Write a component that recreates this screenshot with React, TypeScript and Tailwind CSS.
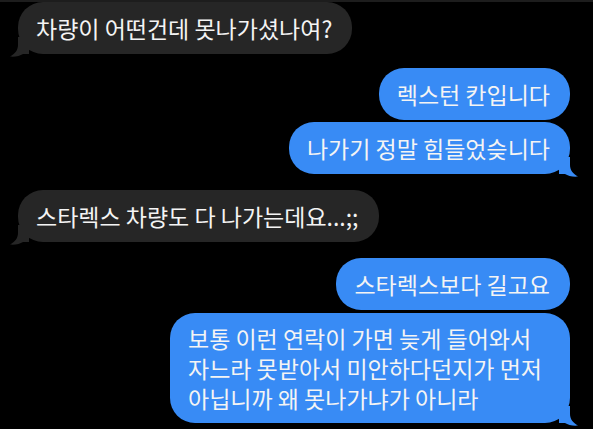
type Msg = { from: "me" | "them"; lines: string[]; tail?: boolean; gap: string };

const messages: Msg[] = [
  { from: "them", lines: ["차량이 어떤건데 못나가셨나여?"], tail: true, gap: "mt-0" },
  { from: "me", lines: ["렉스턴 칸입니다"], gap: "mt-[14px]" },
  { from: "me", lines: ["나가기 정말 힘들었슺니다"], tail: true, gap: "mt-[2px]" },
  { from: "them", lines: ["스타렉스 차량도 다 나가는데요...;;"], tail: true, gap: "mt-[16px]" },
  { from: "me", lines: ["스타렉스보다 길고요"], gap: "mt-[16px]" },
  {
    from: "me",
    lines: [
      "보통 이런 연락이 가면 늦게 들어와서",
      "자느라 못받아서 미안하다던지가 먼저",
      "아닙니까 왜 못나가냐가 아니라",
    ],
    tail: true,
    gap: "mt-[3px]",
  },
];

function Tail({ side, color }: { side: "left" | "right"; color: string }) {
  return (
    <svg
      width="20"
      height="20"
      viewBox="0 0 20 20"
      className={
        side === "right"
          ? "absolute right-[-9px] bottom-[-3px]"
          : "absolute left-[-9px] bottom-[-3px] -scale-x-100"
      }
    >
      <path d="M0 0 L11 0 L11 8 C11 13 14 17 19 19.5 C14 20 9 19 6 17 L0 17 Z" fill={color} />
    </svg>
  );
}

function Bubble({ msg }: { msg: Msg }) {
  const mine = msg.from === "me";
  const color = mine ? "#388bf5" : "#262626";
  const multi = msg.lines.length > 1;
  return (
    <div className={`flex ${mine ? "justify-end pr-[23px]" : "justify-start pl-[18px]"} ${msg.gap}`}>
      <div
        className={`relative rounded-[25px] pl-[18px] text-[23px] leading-[30px] text-[#f4f4f4] ${
          multi ? "py-[10px] pr-[28px]" : "py-[11px] pr-[20px]"
        } ${mine ? "bg-[#388bf5]" : "bg-[#262626]"}`}
      >
        {msg.tail && <Tail side={mine ? "right" : "left"} color={color} />}
        <div className="relative whitespace-nowrap">
          {msg.lines.map((l, i) => (
            <div key={i}>{l}</div>
          ))}
        </div>
      </div>
    </div>
  );
}

export default function App() {
  return (
    <div
      className="h-[429px] w-[593px] overflow-hidden bg-black"
      style={{ fontFamily: '"Noto Sans CJK KR", "Noto Sans", sans-serif' }}
    >
      <div className="h-[2px] bg-[#1d1d1d]" />
      <div className="flex flex-col">
        {messages.map((m, i) => (
          <Bubble key={i} msg={m} />
        ))}
      </div>
    </div>
  );
}
